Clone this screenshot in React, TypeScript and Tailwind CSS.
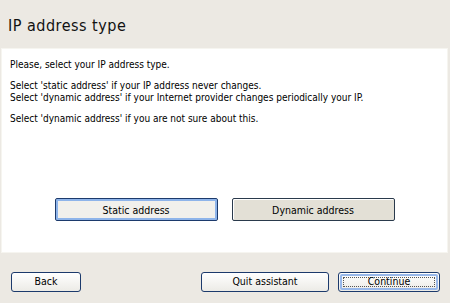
import React from 'react';

const font = { fontFamily: '"DejaVu Sans Condensed", "DejaVu Sans", sans-serif' };

const XpButton = ({ label, className, focus }: { label: string; className: string; focus?: boolean }) => (
  <button
    className={`relative flex items-center justify-center rounded-[3px] border border-[#1c3a6c] bg-gradient-to-b from-white to-[#ecebe6] text-[10.5px] text-black ${className}`}
  >
    {focus && (
      <span className="absolute inset-[1px] rounded-[2px] border-2 border-[#98b8ea]">
        <span className="absolute inset-[1px] border border-dotted border-[#555]" />
      </span>
    )}
    <span className="relative">{label}</span>
  </button>
);

export default function App() {
  return (
    <div className="flex h-[303px] w-[450px] flex-col bg-[#ece9e3] text-black" style={font}>
      {/* Title */}
      <div className="flex h-[48px] items-center px-[8px] pt-[4px]">
        <h1 className="text-[16px] tracking-[0.5px] text-[#111]">IP address type</h1>
      </div>

      {/* Content panel */}
      <div className="mx-[1px] mr-[2px] flex h-[205px] flex-col border border-[#f6f5f0] bg-white px-[8px] pt-[10px] text-[10px] leading-[12px]">
        <p>Please, select your IP address type.</p>
        <p className="mt-[9px]">Select 'static address' if your IP address never changes.</p>
        <p>Select 'dynamic address' if your Internet provider changes periodically your IP.</p>
        <p className="mt-[9px]">Select 'dynamic address' if you are not sure about this.</p>

        <div className="mt-auto mb-[31px] flex justify-center gap-[14px]">
          <button className="flex h-[23px] w-[163px] items-center justify-center rounded-[2px] border border-[#1c3a6c] bg-[#f1f0ec] text-[10.5px] shadow-[inset_0_0_0_2px_#8eb4ea]">
            Static address
          </button>
          <button className="flex h-[23px] w-[163px] items-center justify-center rounded-[2px] border border-[#2a3a4c] bg-[#e3e0d6] text-[10.5px] shadow-[inset_1px_1px_0_#fff]">
            Dynamic address
          </button>
        </div>
      </div>

      {/* Footer */}
      <div className="flex flex-1 items-start pt-[19px] pl-[11px] pr-[10px]">
        <XpButton label="Back" className="h-[20px] w-[70px]" />
        <div className="flex-1" />
        <XpButton label="Quit assistant" className="h-[20px] w-[128px]" />
        <XpButton label="Continue" className="ml-[9px] h-[20px] w-[102px]" focus />
      </div>
    </div>
  );
}
